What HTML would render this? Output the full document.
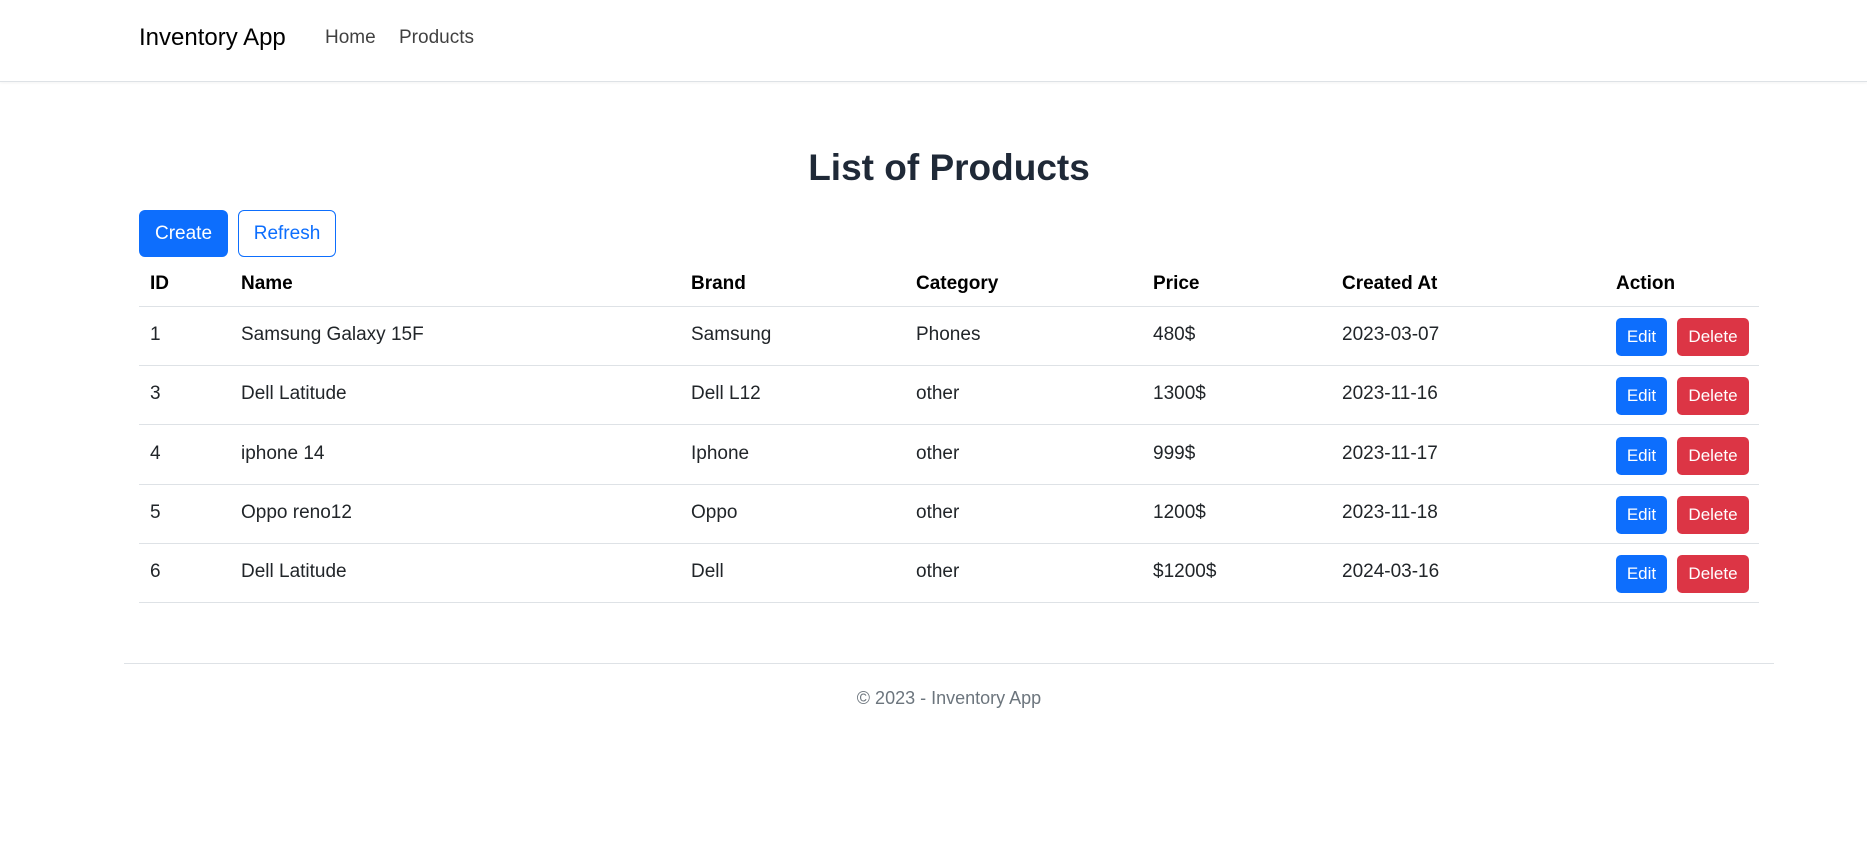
<!DOCTYPE html>
<html><head><meta charset="utf-8"><style>
*{box-sizing:border-box;margin:0;padding:0}
body{width:1867px;height:861px;background:#fff;font-family:"Liberation Sans",sans-serif;color:#212529;font-size:19px;position:relative;overflow:hidden}
.nav{position:absolute;left:0;top:0;width:1867px;height:82px;border-bottom:1px solid #dee2e6;box-shadow:0 1px 3px rgba(0,0,0,.05)}
.a{position:absolute;white-space:nowrap}
.brand{left:139px;top:24px;font-size:24px;color:#000}
.nl{top:27px;font-size:19px;color:rgba(0,0,0,.75)}
h1{position:absolute;left:0;width:1898px;text-align:center;top:147px;font-size:37px;font-weight:bold;color:#1f2937}
.btn{position:absolute;border-radius:6px;text-align:center;font-size:19px}
.row{position:absolute;left:139px;width:1620px;height:59px;border-bottom:1px solid #dee2e6}
.row span{position:absolute;top:17px;white-space:nowrap}
.hd span{font-weight:bold;color:#000;top:25px}
.e{position:absolute;top:11px;height:38px;border-radius:5px;color:#fff;font-size:17px;line-height:38px;text-align:center}
</style></head><body>
<div class="nav">
<div class="a brand">Inventory App</div>
<div class="a nl" style="left:325px">Home</div>
<div class="a nl" style="left:399px">Products</div>
</div>
<h1>List of Products</h1>
<div class="btn" style="left:139px;top:210px;width:89px;height:47px;background:#0d6efd;color:#fff;line-height:47px">Create</div>
<div class="btn" style="left:238px;top:210px;width:98px;height:47px;border:1px solid #0d6efd;color:#0d6efd;line-height:45px">Refresh</div>

<div class="row hd" style="top:248px"><span style="left:11px">ID</span><span style="left:102px">Name</span><span style="left:552px">Brand</span><span style="left:777px">Category</span><span style="left:1014px">Price</span><span style="left:1203px">Created At</span><span style="left:1477px">Action</span></div>

<div class="row" style="top:307px"><span style="left:11px">1</span><span style="left:102px">Samsung Galaxy 15F</span><span style="left:552px">Samsung</span><span style="left:777px">Phones</span><span style="left:1014px">480$</span><span style="left:1203px">2023-03-07</span><div class="e" style="left:1477px;width:51px;background:#0d6efd">Edit</div><div class="e" style="left:1538px;width:72px;background:#dc3545">Delete</div></div>
<div class="row" style="top:366px"><span style="left:11px">3</span><span style="left:102px">Dell Latitude</span><span style="left:552px">Dell L12</span><span style="left:777px">other</span><span style="left:1014px">1300$</span><span style="left:1203px">2023-11-16</span><div class="e" style="left:1477px;width:51px;background:#0d6efd">Edit</div><div class="e" style="left:1538px;width:72px;background:#dc3545">Delete</div></div>
<div class="row" style="top:426px"><span style="left:11px">4</span><span style="left:102px">iphone 14</span><span style="left:552px">Iphone</span><span style="left:777px">other</span><span style="left:1014px">999$</span><span style="left:1203px">2023-11-17</span><div class="e" style="left:1477px;width:51px;background:#0d6efd">Edit</div><div class="e" style="left:1538px;width:72px;background:#dc3545">Delete</div></div>
<div class="row" style="top:485px"><span style="left:11px">5</span><span style="left:102px">Oppo reno12</span><span style="left:552px">Oppo</span><span style="left:777px">other</span><span style="left:1014px">1200$</span><span style="left:1203px">2023-11-18</span><div class="e" style="left:1477px;width:51px;background:#0d6efd">Edit</div><div class="e" style="left:1538px;width:72px;background:#dc3545">Delete</div></div>
<div class="row" style="top:544px"><span style="left:11px">6</span><span style="left:102px">Dell Latitude</span><span style="left:552px">Dell</span><span style="left:777px">other</span><span style="left:1014px">$1200$</span><span style="left:1203px">2024-03-16</span><div class="e" style="left:1477px;width:51px;background:#0d6efd">Edit</div><div class="e" style="left:1538px;width:72px;background:#dc3545">Delete</div></div>

<div class="a" style="left:124px;top:663px;width:1650px;border-top:1px solid #dee2e6"></div>
<div class="a" style="left:0;width:1898px;text-align:center;top:688px;color:#6c757d;font-size:18px">© 2023 - Inventory App</div>
</body></html>
